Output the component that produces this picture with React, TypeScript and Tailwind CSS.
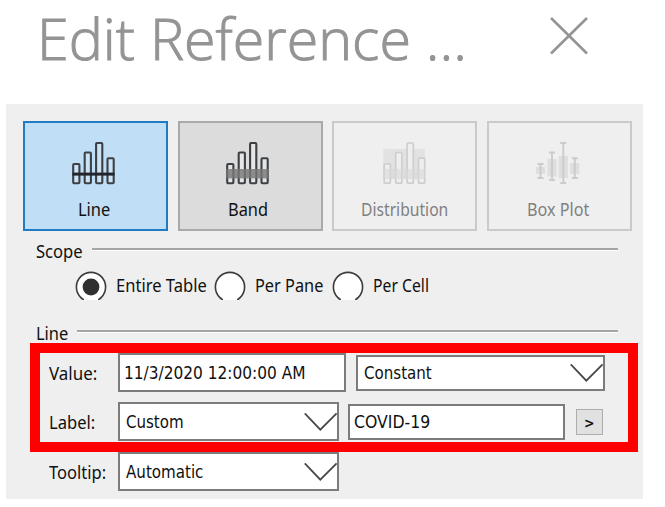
import { useLayoutEffect, useRef, useState } from "react";
import type { ReactNode } from "react";

/* A line of text condensed or widened to an exact width. */
function Fit({ w, children, className = "" }: { w: number; children: string; className?: string }) {
  const ref = useRef<HTMLSpanElement>(null);
  const [k, setK] = useState(1);
  useLayoutEffect(() => {
    if (ref.current) setK(w / ref.current.offsetWidth);
  }, [w]);
  return (
    <span className={`block shrink-0 whitespace-nowrap ${className}`} style={{ width: w }}>
      <span ref={ref} className="inline-block origin-left" style={{ transform: `scaleX(${k})` }}>
        {children}
      </span>
    </span>
  );
}

const bars = [
  { x: 1.2, y: 22 },
  { x: 12.7, y: 10.5 },
  { x: 24.1, y: 1 },
  { x: 35.5, y: 16.2 },
];

function BarsIcon({ kind }: { kind: "line" | "band" | "dist" }) {
  const dim = kind === "dist";
  return (
    <svg width="44" height="44" viewBox="0 0 44 44" fill="none">
      {dim && <rect x="0.3" y="7" width="41.6" height="30" fill="#e2e2e2" />}
      {bars.map((b) => (
        <rect
          key={b.x}
          x={b.x}
          y={b.y}
          width="6.2"
          height={41.2 - b.y}
          rx="1"
          stroke={dim ? "#cecece" : "#3d4146"}
          strokeWidth={dim ? 1.7 : 2.1}
          fill={dim ? "#eeeeee" : kind === "band" ? "#e6e6e6" : "#cbe3f7"}
        />
      ))}
      {dim && <rect x="0.3" y="27" width="41.6" height="10" fill="#d8d8d8" opacity="0.6" />}
      {kind === "line" && <rect x="0.5" y="30.6" width="42" height="3" fill="#22262a" />}
      {kind === "band" && <rect x="0.3" y="27" width="42.2" height="9.4" fill="#777777" opacity="0.82" />}
    </svg>
  );
}

function BoxPlotIcon() {
  const items = [
    { c: 4.5, t: 22, b: 36, bt: 25, bb: 32 },
    { c: 16, t: 10.5, b: 38, bt: 17, bb: 34.5 },
    { c: 27.3, t: 1, b: 41, bt: 14, bb: 36 },
    { c: 38.8, t: 16.3, b: 36, bt: 21, bb: 32 },
  ];
  return (
    <svg width="44" height="44" viewBox="0 0 44 44">
      {items.map((i) => (
        <g key={i.c}>
          <rect x={i.c - 4.6} y={i.bt} width="9.2" height={i.bb - i.bt} fill="#dedede" />
          <path
            d={`M${i.c - 3} ${i.t}h6M${i.c} ${i.t}V${i.b}M${i.c - 3} ${i.b}h6`}
            stroke="#cbcbcb"
            strokeWidth="1.9"
          />
        </g>
      ))}
    </svg>
  );
}

function Tile({ tone, label, w, icon }: { tone: string; label: string; w: number; icon: ReactNode }) {
  return (
    <div className={`flex h-[110px] w-[145px] flex-col items-center border-2 ${tone}`}>
      {icon}
      <Fit w={w} className="mt-[11px]">
        {label}
      </Fit>
    </div>
  );
}

function Heading({ label, w }: { label: string; w: number }) {
  return (
    <div className="flex h-6 items-center pr-[25px] pl-[30px]">
      <Fit w={w}>{label}</Fit>
      <div className="mb-[3px] ml-[9px] h-[3px] flex-1 border-b border-white bg-[#a5a5a5]" />
    </div>
  );
}

function Radio({ on }: { on?: boolean }) {
  return (
    <svg width="32" height="29" viewBox="0 0 32 29" className="shrink-0">
      <circle cx="16" cy="16" r="14.6" fill="#ffffff" stroke="#3c3c3c" strokeWidth="1.6" />
      {on && <circle cx="16" cy="16" r="8.4" fill="#303030" />}
      <rect x="9" y="28" width="14" height="1" fill="#ffffff" />
    </svg>
  );
}

function Select({ label, w, className }: { label: string; w: number; className: string }) {
  return (
    <div className={`flex items-center justify-between border-2 border-[#7c7c7c] bg-white pl-1.5 ${className}`}>
      <Fit w={w}>{label}</Fit>
      <svg width="34" height="18" viewBox="0 0 34 18" fill="none" className="shrink-0">
        <path d="M1.8 0.4 L17.3 16.6 L33.6 0.4" stroke="#484848" strokeWidth="1.8" />
      </svg>
    </div>
  );
}

export default function App() {
  return (
    <div className="h-[507px] w-[665px] bg-white font-['Noto_Sans',sans-serif] text-[18px] leading-6 text-[#111111]">
      <header className="flex h-[104px] items-start pl-[37px] text-[#949494]">
        <Fit w={430} className="font-['Open_Sans','Noto_Sans',sans-serif] text-[57px] leading-[76px] font-light [-webkit-text-stroke:1px_#949494]">
          Edit Reference ...
        </Fit>
        <svg width="40" height="40" viewBox="0 0 40 40" className="mt-[16px] ml-[82px] shrink-0">
          <path d="M2 2 L38 37.5 M38 2 L2 37.5" stroke="#949494" strokeWidth="2.6" />
        </svg>
      </header>
      <main className="relative ml-[6px] h-[395px] w-[637px] bg-[#efefef] pt-[17px]">
        <div className="flex gap-[9.5px] pl-[17px]">
          <Tile tone="pt-[19px] pr-[3px] border-[#1f7bc4] bg-[#c0def6]" label="Line" w={32} icon={<BarsIcon kind="line" />} />
          <Tile tone="pt-[19px] pr-[4px] border-[#a9a9a9] bg-[#dcdcdc]" label="Band" w={40} icon={<BarsIcon kind="band" />} />
          <Tile tone="pt-[19px] border-[#cacaca] text-[#808080]" label="Distribution" w={87} icon={<BarsIcon kind="dist" />} />
          <Tile tone="pt-[19px] pr-[2px] border-[#cacaca] text-[#808080]" label="Box Plot" w={62} icon={<BoxPlotIcon />} />
        </div>
        <div className="mt-[8px]">
          <Heading label="Scope" w={47} />
        </div>
        <div className="mt-[7.5px] flex h-[29px] items-center pl-[69px]">
          <Radio on />
          <Fit w={91} className="ml-[9px]">Entire Table</Fit>
          <div className="ml-[7px] flex"><Radio /></div>
          <Fit w={68} className="ml-[9px]">Per Pane</Fit>
          <div className="ml-[9px] flex"><Radio /></div>
          <Fit w={56} className="ml-[9px]">Per Cell</Fit>
        </div>
        <div className="mt-[21.5px]">
          <Heading label="Line" w={32} />
        </div>
        <div className="mt-[8px] flex h-[39px] items-center pl-[43px] font-['DejaVu_Sans_Condensed','DejaVu_Sans',sans-serif] text-[17px]">
          <Fit w={48} className="mr-[21px] font-['Noto_Sans',sans-serif] text-[18px]">Value:</Fit>
          <div className="flex h-[39px] w-[228px] items-center border-2 border-[#7c7c7c] bg-white pl-1">
            <Fit w={181}>11/3/2020 12:00:00 AM</Fit>
          </div>
          <Select label="Constant" w={68} className="ml-[10px] h-[36px] w-[249px]" />
        </div>
        <div className="mt-[10px] flex h-[39px] items-center pl-[43px] font-['DejaVu_Sans_Condensed','DejaVu_Sans',sans-serif] text-[17px]">
          <Fit w={46} className="mr-[23px] font-['Noto_Sans',sans-serif] text-[18px]">Label:</Fit>
          <Select label="Custom" w={58} className="h-[39px] w-[221px]" />
          <div className="ml-[9px] flex h-[36px] w-[217px] items-center border-2 border-[#7c7c7c] bg-white pl-1">
            <Fit w={76}>COVID-19</Fit>
          </div>
          <div className="ml-[11px] flex h-[26px] w-[27px] items-center justify-center border-[1.5px] border-[#adadad] bg-[#e1e1e1] pt-[3px]">
            <Fit w={11} className="text-[14px] font-bold">{">"}</Fit>
          </div>
        </div>
        <div className="mt-[11px] flex h-[39px] items-center pl-[43px] font-['DejaVu_Sans_Condensed','DejaVu_Sans',sans-serif] text-[17px]">
          <Fit w={57} className="mr-[12px] font-['Noto_Sans',sans-serif] text-[18px]">Tooltip:</Fit>
          <Select label="Automatic" w={77} className="h-[39px] w-[221px]" />
        </div>
        <div className="absolute top-[239px] left-[24px] h-[109px] w-[608px] border-[10px] border-[#fe0000]" />
      </main>
    </div>
  );
}
